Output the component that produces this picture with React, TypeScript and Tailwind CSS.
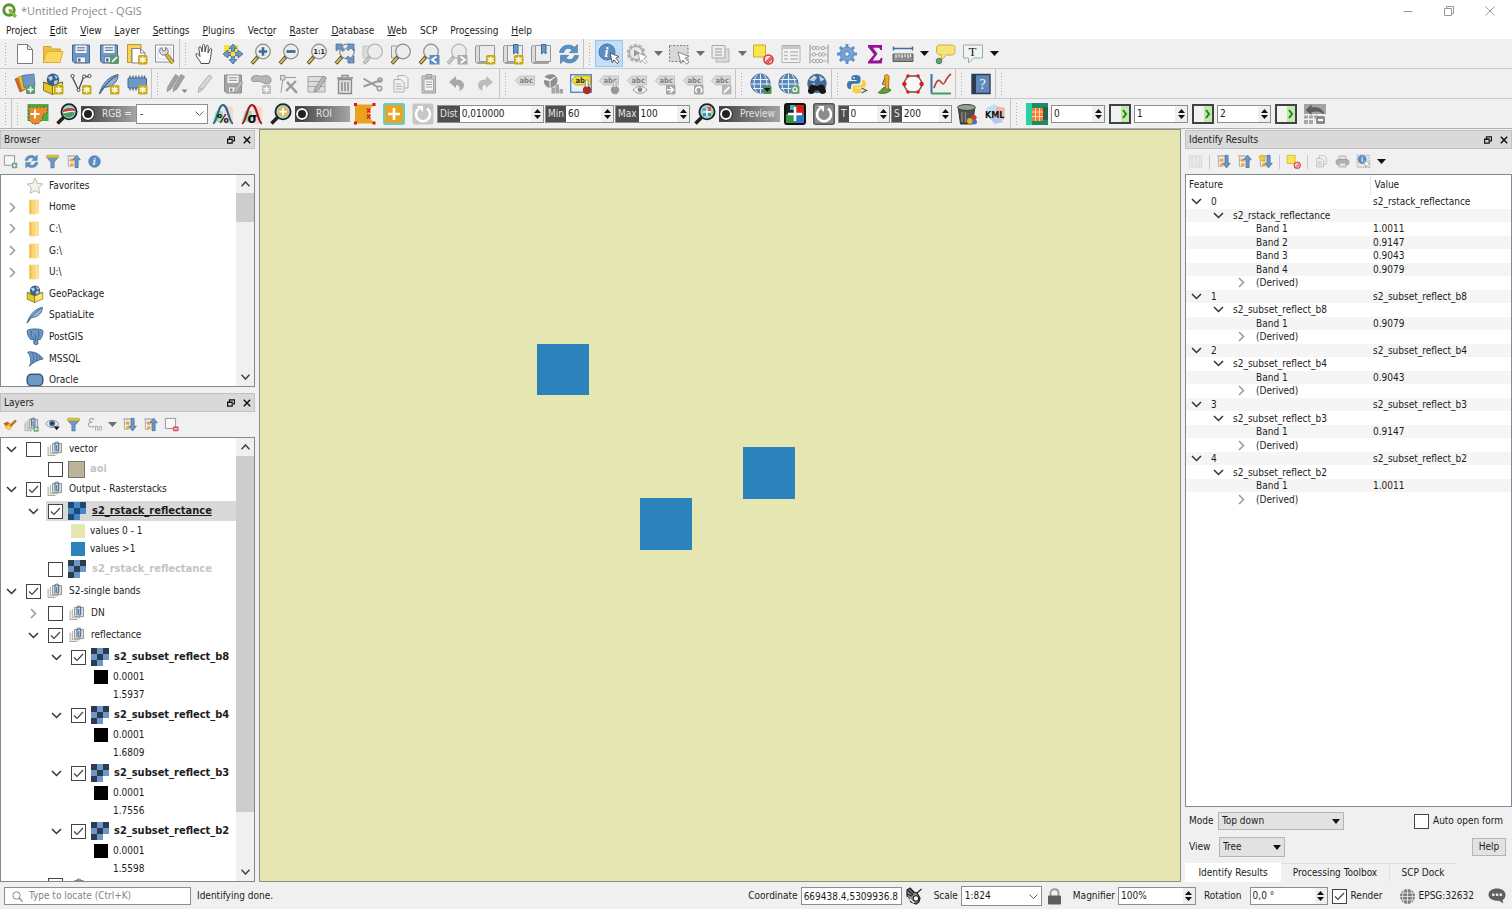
import React, { useState } from "react";
import type { ReactNode } from "react";

const BLUE = "#6d97c4";
const DBLUE = "#3d6b9c";
const GRAY = "#b4b4b4";

function Svg({ children, size = "size-[22px]", box = "0 0 22 22" }: { children: ReactNode; size?: string; box?: string }) {
  return (
    <svg viewBox={box} className={`${size} shrink-0`} fill="none" aria-hidden="true">
      {children}
    </svg>
  );
}

/* ---------- shared drawing parts ---------- */
const Star = () => (
  <g>
    <rect x="12" y="12" width="9.500" height="9.500" rx="1.500" fill="#c9a91c" />
    <path d="M16.700 13.400v6.700M13.700 15l6 3.500M13.700 18.500l6-3.500" stroke="#fffbe0" strokeWidth="1.500" />
  </g>
);
const GreenBadge = ({ d }: { d: string }) => (
  <g>
    <rect x="12" y="12" width="9" height="9" rx="1.500" fill="#5d9a6c" />
    <path d={d} stroke="#fff" strokeWidth="1.600" />
  </g>
);
const Mag = ({ off = false, children }: { off?: boolean; children?: ReactNode }) => (
  <g>
    <path d="M8 13.500L2 20.500" stroke={off ? "#aaa" : "#4a4a3c"} strokeWidth="3.600" />
    <path d="M7 14.600L2.400 19.800" stroke={off ? "#ccc" : "#e9c04b"} strokeWidth="2" />
    <circle cx="13" cy="8.500" r="7.300" fill="#ecedeb" stroke={off ? "#b5b5b5" : "#8b8e86"} strokeWidth="1.200" />
    {children}
  </g>
);
const Globe = () => (
  <g>
    <circle cx="10.500" cy="10.500" r="9.600" fill="#5b86b8" stroke="#456f9f" />
    <path d="M2.500 6.500h16M1 11h19M3 15.500h15M10.500 1v19M7 1.600c-4 5-4 13 0 18M14 1.600c4 5 4 13 0 18" stroke="#e8eff7" strokeWidth="1" />
  </g>
);
const Floppy = ({ c, b }: { c: string; b: string }) => (
  <g>
    <path d="M2.500 2h17v18h-15l-2-2z" fill={c} stroke={b} />
    <path d="M5.500 2.500h11v7.500h-11z" fill="#f3f3f3" />
    <path d="M7 4.800h8M7 7.300h8" stroke={b} />
    <path d="M6.500 14h9v5.500h-9z" fill="#f3f3f3" stroke={b} strokeWidth=".600" />
    <path d="M8 15.500h2.500v3H8z" fill={b} />
  </g>
);
const Tag = ({ y = false }: { y?: boolean }) => (
  <g>
    <path d="M1.500 7.500L5.500 3H20.500v9H5.500z" fill={y ? "#f5dd3c" : "#dadada"} stroke={y ? "#b49c22" : "#bcbcbc"} strokeWidth=".900" />
    <text x="5.500" y="10.300" fontSize="7.500" fontWeight="bold" fill={y ? "#333" : "#808080"} fontFamily="DejaVu Sans Condensed, sans-serif">
      {y ? "ab" : "abc"}
    </text>
  </g>
);
const Cursor = ({ x = 0, y = 0, c = "#fff", s = "#555" }: { x?: number; y?: number; c?: string; s?: string }) => (
  <path d={`M${12 + x} ${10 + y}l9 3.600-3.200 1.600 3.400 3.600-2 1.800-3.300-3.800-1.600 3z`} fill={c} stroke={s} strokeWidth="1" />
);
const ScpLens = ({ children }: { children?: ReactNode }) => (
  <g>
    <path d="M7.500 14.500L1.500 20.500" stroke="#24201c" strokeWidth="3.600" />
    <circle cx="13" cy="8.700" r="7.600" fill="#9fd6d3" stroke="#222" strokeWidth="1.800" />
    {children}
  </g>
);
const Book = ({ mark = false }: { mark?: boolean }) => (
  <g>
    <path d="M5.500 2.500h15v16h-15z" fill="#ececec" stroke="#969696" />
    <path d="M1.500 4c0-2 4-2 4 0v14.500c0 2-4 2-4 0z" fill="#dcdcdc" stroke="#969696" />
    <path d="M3.500 20h14.500v-1.500" stroke="#8a8a8a" strokeWidth="1.300" />
    {mark && <path d="M11.500 1.500H16v9.500l-2.200-2-2.300 2z" fill={BLUE} stroke={DBLUE} />}
  </g>
);
const RefreshShape = () => (
  <g fill="#5a90c4" stroke="#3f74aa" strokeWidth=".6">
    <path d="M1.500 9.500C2 3 11-.5 16.500 4.200L19.500 1.500v8.200h-8.200l2.800-2.800C10 4 6.500 5.500 5.800 9.500z" />
    <path d="M20.500 12.500C20 19 11 22.500 5.500 17.800L2.500 20.500v-8.200h8.200l-2.800 2.800C12 18 15.500 16.500 16.200 12.500z" />
  </g>
);
const TreeArrow = ({ up = false, star = false }: { up?: boolean; star?: boolean }) => (
  <g>
    <path d="M3.500 4v14h4M3.500 9h4" stroke="#a0a0a0" strokeWidth="1.200" />
    <path d="M6 6.500h5v5H6zM6 13.500h5v5H6z" fill="#f0a63a" />
    <path d="M2 3h11" stroke="#a9a9a9" strokeWidth="2" />
    {star && <path d="M6 1l1.600 3.200 3.600.500-2.600 2.500.600 3.500L6 9.200l-3.200 1.500.600-3.500L.8 4.700l3.600-.500z" fill="#f7d02a" stroke="#d6a51c" strokeWidth=".600" />}
    {up ? (
      <path d="M15.500 1.500l5.500 7h-3.200V20h-4.600V8.500H10z" fill={BLUE} stroke={DBLUE} />
    ) : (
      <path d="M15.500 20.500l5.500-7h-3.200V2h-4.600v11.500H10z" fill={BLUE} stroke={DBLUE} />
    )}
  </g>
);
const Funnel = () => (
  <g>
    <path d="M2.500 5L8.500 12v8.500h5V12l6-7z" fill={BLUE} stroke={DBLUE} strokeWidth=".7" />
    <rect x="2" y="1.500" width="18" height="4" rx="1" fill="#d9c53e" stroke="#a8962c" strokeWidth=".6" />
  </g>
);
const GeoBox = () => (
  <g>
    <path d="M1.500 9l9 3.500v9l-9-4z" fill="#e3c525" stroke="#6e6213" strokeWidth=".8" />
    <path d="M20.500 9l-10 3.500v9l10-4.500z" fill="#f8e768" stroke="#6e6213" strokeWidth=".8" />
    <circle cx="11" cy="6.800" r="6.300" fill="#38608c" />
    <path d="M6 4l4-1 1 3-3 2zM12 2l4 2-2 2zM12 8l4-1-1 4-3 1z" fill="#b9d0e8" />
    <path d="M1.500 9l9 3.500 10-3.500" stroke="#6e6213" strokeWidth=".8" />
  </g>
);
const Feather = () => (
  <g>
    <path d="M1.500 20.500C4 12 9 4 20 1.500c.5 6-5 12.500-13.500 12.800z" fill="#8fb2d6" stroke="#3f6286" />
    <path d="M1.500 21C6 13 11 7 18.500 3" stroke="#3f6286" strokeWidth="1.200" />
  </g>
);
const Clip = () => (
  <g>
    <path d="M1.500 8v12h10M4.500 5.500v12h11" stroke="#a8a8a0" strokeWidth="1.400" />
    <path d="M7.500 3.500h12.500v12.500H7.500z" fill="#dededa" stroke="#8f8f88" strokeWidth="1.300" />
    <path d="M11 14V4c0-3.500 5-3.500 5 0v8c0 2.500-2.700 2.500-2.700 0V5.500" stroke="#4b79ab" strokeWidth="1.600" />
  </g>
);
const NoEntry = () => (
  <g>
    <circle cx="16.500" cy="16.500" r="4.500" fill="#f9dddd" stroke="#d83a44" strokeWidth="1.600" />
    <path d="M13.500 19.500l6-6M15.500 20l4.500-4.500" stroke="#d83a44" strokeWidth="1.200" />
  </g>
);

const ICONS: Record<string, ReactNode> = {
  newDoc: <path d="M3.500 1.500h10l5 5v14h-15zM13.500 1.500v5h5" fill="#fff" stroke="#7b7b7b" />,
  open: (
    <g>
      <path d="M1.500 19V3.500h7l2 2.500h8V9" fill="#ecc03c" stroke="#d3a52c" />
      <path d="M1 19.500l4-11h16l-3 11z" fill="#fbd75b" stroke="#dcae35" />
    </g>
  ),
  save: <Floppy c={BLUE} b="#46658c" />,
  saveAs: (
    <g>
      <Floppy c={BLUE} b="#46658c" />
      <GreenBadge d="M14 19l5-5" />
    </g>
  ),
  layout: (
    <g>
      <path d="M1.500 1.500H15v4H5.500v14h-4z" fill="#f3d35a" stroke="#b99a2b" />
      <path d="M6 5.500h8.500l4.500 4.500v10H6z" fill="#fff" stroke="#858585" />
      <path d="M14.500 5.500V10H19" stroke="#858585" />
      <Star />
    </g>
  ),
  tools: (
    <g>
      <path d="M1.500 2h18v17h-18z" fill="#fff" stroke="#86909a" />
      <path d="M4 5h13v11H4z" stroke="#c5d4e3" />
      <path d="M12 11l7 9" stroke="#8d7322" strokeWidth="4" />
      <path d="M12 11l7 9" stroke="#e0b53a" strokeWidth="2.400" />
      <path d="M7.500 4.500A4 4 0 0 0 12 11.500l2-1.500c.8-2.500-.5-5-2.500-5.500L11.500 7.500 9 8z" fill="#ddd" stroke="#777" />
    </g>
  ),
  hand: (
    <path
      d="M7 20.500c-1-3-4-5.500-5-8.500-.4-1.700 1.400-2 2.200-.8l1.800 2.300L4.800 5c0-1.600 2-1.700 2.300-.2L8.200 9l.3-6.500c.1-1.500 2.100-1.500 2.200 0L11 9l1.200-5.800c.4-1.400 2.200-1.100 2.100.4L14 10l1.800-4c.6-1.200 2.200-.6 1.900.8-.9 4.500-.9 9.500-2.700 13.700z"
      fill="#fff"
      stroke="#4d4d4d"
    />
  ),
  pan: (
    <g>
      <rect x="2" y="2" width="14" height="12" fill="#f7df4b" />
      <path d="M11 1l4 4.500h-2.500v4H16V7l5 4-5 4v-2.500h-3.500v4H15L11 21l-4-4.500h2.500v-4H6V15l-5-4 5-4v2.500h3.500v-4H7z" fill={BLUE} stroke={DBLUE} strokeWidth=".8" />
      <path d="M9 9h4v4H9z" fill="#f7df4b" />
    </g>
  ),
  zoomIn: <Mag><path d="M13 4.300v8.400M8.800 8.500h8.400" stroke={DBLUE} strokeWidth="2.600" /></Mag>,
  zoomOut: <Mag><path d="M8.500 8.500h9" stroke={DBLUE} strokeWidth="2.800" /></Mag>,
  zoomOne: (
    <Mag>
      <text x="7.500" y="11.200" fontSize="7" fontWeight="bold" fill="#222" fontFamily="DejaVu Sans Condensed, sans-serif">1:1</text>
    </Mag>
  ),
  zoomFull: (
    <g>
      <Mag />
      <path d="M2 1h6v2.500l3 3-2 2-3.500-3L2 8zM20 1h-6v2.500l-2 2 2 2 3-2.500 3 3zM20 20h-6v-3l-2-2 2-2 3 3 3-3z" fill={BLUE} stroke={DBLUE} strokeWidth=".7" />
    </g>
  ),
  zoomSel: (
    <g>
      <path d="M1 3h12v12H1z" fill="#dcdcdc" stroke="#c4c4c4" />
      <Mag off />
    </g>
  ),
  zoomLayer: (
    <g>
      <path d="M1.500 3h12v12h-12z" fill="#e8e8e8" stroke="#999" />
      <Mag />
    </g>
  ),
  zoomLast: (
    <g>
      <Mag />
      <rect x="11.500" y="12" width="10" height="9.500" fill="#5b8fc4" />
      <path d="M18.500 13.500l-4.500 3.200 4.500 3.200" stroke="#fff" strokeWidth="1.800" />
    </g>
  ),
  zoomNext: (
    <g>
      <Mag off />
      <rect x="11.500" y="12" width="10" height="9.500" fill="#adadad" />
      <path d="M14.500 13.500l4.500 3.200-4.500 3.200" stroke="#fff" strokeWidth="1.800" />
    </g>
  ),
  newView: <g><Book /><Star /></g>,
  newBook: <g><Book mark /><Star /></g>,
  book: <Book mark />,
  refresh: <RefreshShape />,
  identify: (
    <g>
      <circle cx="9" cy="9" r="8" fill="#5c8ec4" stroke="#4677ac" />
      <text x="6.500" y="14" fontSize="14" fontStyle="italic" fontWeight="bold" fill="#fff" fontFamily="Liberation Serif, serif">i</text>
      <Cursor />
    </g>
  ),
  action: (
    <g>
      <circle cx="10" cy="10" r="8" fill="#dadada" stroke={GRAY} strokeWidth="2.600" strokeDasharray="3.400 1.600" />
      <circle cx="10" cy="10" r="6.500" fill="#e8e8e8" stroke="#999" />
      <path d="M8 6.500l6 3.500-6 3.500z" fill="#999" />
      <Cursor s="#aaa" />
    </g>
  ),
  select: (
    <g>
      <rect x="1.500" y="2.500" width="18.500" height="16" fill="#d8d8d8" stroke="#7e7e7e" strokeDasharray="2 1.500" />
      <path d="M10 9l11 4.500-4 1.700 4 4-2.200 2-4-4.200-1.800 3.500z" fill="#fff" stroke="#888" />
    </g>
  ),
  multi: (
    <g>
      <path d="M6 6h13v13H6z" fill="#dcdcdc" stroke={GRAY} />
      <path d="M2 2.500h13V15H2z" fill="#ededed" stroke="#a8a8a8" />
      <path d="M5 6h7M5 9h7M5 12h7" stroke={GRAY} strokeWidth="1.400" />
    </g>
  ),
  deselect: <g><path d="M1.500 2h12v12h-12z" fill="#fbe54d" stroke="#c7ac2c" /><NoEntry /></g>,
  table: (
    <g>
      <path d="M2 2.500h18v17H2z" fill="#f3f3f3" stroke="#b0b0b0" />
      <path d="M2 3h18v3H2z" fill="#c5c5c5" />
      <path d="M4 9h4M10 9h8M4 12.500h4M10 12.500h8M4 16h4M10 16h8" stroke="#bcbcbc" strokeWidth="1.500" />
    </g>
  ),
  abacus: (
    <g>
      <path d="M2 1.500v19M20 1.500v19" stroke="#a8a8a8" strokeWidth="1.300" />
      <path d="M2 5h18M2 11.500h18M2 18h18" stroke="#b5b5b5" />
      {[6, 9.500, 15].map((x) => <circle key={x} cx={x} cy="5" r="1.700" fill="#eee" stroke="#a5a5a5" />)}
      {[6, 12, 15.500].map((x) => <circle key={x} cx={x} cy="11.500" r="1.700" fill="#eee" stroke="#a5a5a5" />)}
      {[6, 9.500, 13].map((x) => <circle key={x} cx={x} cy="18" r="1.700" fill="#eee" stroke="#a5a5a5" />)}
    </g>
  ),
  gear: (
    <g>
      <path d="M11 1v20M1 11h20M3.900 3.900l14.200 14.200M18.100 3.900L3.900 18.100" stroke="#5a8fc9" strokeWidth="2.800" />
      <circle cx="11" cy="11" r="7" fill="#75a3d4" stroke="#5a8fc9" />
      <circle cx="11" cy="11" r="2.300" fill="#f0f0f0" stroke="#4e80b8" />
    </g>
  ),
  sigma: <path d="M4 2h14v5h-1.800c-.4-1.800-1-2.200-3-2.200H9l4.500 6L8.500 17.500h5c2 0 2.800-.8 3.200-2.500h1.800l-.8 5.500H4v-1.800l6-7.200-6-7.600z" fill="#9a0f9a" />,
  measure: (
    <g>
      <path d="M1.500 5.500h19M1.500 3.500v4M20.500 3.500v4" stroke="#3f6f9f" strokeWidth="1.400" />
      <path d="M1 11h20v7.500H1z" fill="#8d8d8d" stroke="#5c5c5c" />
      <path d="M4 11v4M7 11v3M10 11v4M13 11v3M16 11v4M18.500 11v3" stroke="#fff" />
    </g>
  ),
  tips: (
    <g>
      <path d="M5 2h13c3 0 3 2 3 4.500S21 12 18 12h-6l-5 6 .5-6C3 12 2.500 10 2.500 7S3 2 5 2z" fill="#f8e27a" stroke="#cbb03e" />
      <circle cx="5" cy="18" r="2.800" fill="#6aa277" stroke="#4b8057" />
    </g>
  ),
  textNote: (
    <g>
      <path d="M1.500 2h19v13h-9l-5 5v-5h-5z" fill="#eff4f6" stroke="#a2a9ad" />
      <text x="6.500" y="13" fontSize="13" fill="#222" fontFamily="Liberation Serif, serif">T</text>
    </g>
  ),
  /* second bar */
  dataSource: (
    <g>
      <path d="M1 6l8-3 5 12-8 4z" fill="#d8602c" stroke="#a8481e" strokeWidth=".7" />
      <path d="M4 4l9-2 4 12-9 3z" fill="#e5c02a" stroke="#b1921a" strokeWidth=".7" />
      <path d="M8 2.500L20 1l1 11.500-11 2z" fill={BLUE} stroke={DBLUE} strokeWidth=".7" />
      <GreenBadge d="M16.500 13.500v6M13.500 16.500h6" />
    </g>
  ),
  geopkg: <g><GeoBox /><Star /></g>,
  shape: (
    <g>
      <path d="M2.500 4.500L8.500 17 14 3l5 1" stroke="#444e58" strokeWidth="1.300" />
      <g fill="#fff" stroke="#444e58"><circle cx="2.500" cy="3" r="1.600" /><circle cx="14" cy="3.500" r="1.600" /><circle cx="19.500" cy="3" r="1.600" /><circle cx="8.500" cy="17" r="1.500" /></g>
      <Star />
    </g>
  ),
  spatialite: <g><Feather /><Star /></g>,
  memory: (
    <g>
      <path d="M4 2.500v15M7 2.500v15M10 2.500v15M13 2.500v15M16 2.500v15M18.500 2.500v15" stroke="#47698f" strokeWidth="1.300" />
      <rect x="2" y="5" width="18.500" height="10" rx="1" fill={BLUE} stroke="#47698f" />
      <Star />
    </g>
  ),
  edits: (
    <g>
      <path d="M1 18.500l1-5L9.500 1.500l3 2L5 16zM7 18.500l1-5 7-12 3.500 2L11 16z" fill="#a2a2a2" stroke="#858585" strokeWidth=".7" />
      <path d="M15.500 16.500h6l-3 3.500z" fill="#888" />
    </g>
  ),
  pencil: <path d="M4 19.500l1-5L15 2l3 2.200-9.500 12.500zM5 14.500l3.500 2.200" fill="#d6d6d6" stroke="#b0b0b0" />,
  saveEdits: <g><Floppy c="#a5a5a5" b="#8c8c8c" /><path d="M12 20l1-4 5.500-8.500L21 9.500l-5.500 8.500z" fill="#bbb" stroke="#888" strokeWidth=".7" /></g>,
  polygon: (
    <g>
      <path d="M1.500 6c0-4 5-4 8-3 4 1 6-1.500 9 0 4 2.500 3 8-1 8-4 0-4-2-8-2.500C5 8 1.500 10 1.500 6z" fill="#b5b5b5" stroke="#999" />
      <rect x="12" y="12" width="9" height="9" rx="1.500" fill="#bcbcbc" />
      <path d="M16.500 13.200v6.600M13.400 15l6.200 3M13.400 18l6.200-3" stroke="#fff" strokeWidth="1.300" />
    </g>
  ),
  vertex: (
    <g stroke="#9a9a9a">
      <path d="M5 4.500l-2 15M5 4.500h13" />
      <path d="M2.500 2.500h4.500v4.500H2.500z" fill="#ddd" />
      <path d="M9 9l10 11" strokeWidth="2.600" />
      <path d="M18 8L8 18" strokeWidth="2.200" />
    </g>
  ),
  multiEdit: (
    <g>
      <path d="M2 3.500h17v15.500H2zM2 8.500h17M2 13.500h17" fill="#ddd" stroke="#a5a5a5" />
      <path d="M8 19l1-4 8-12 3.500 2L12.500 17z" fill="#b5b5b5" stroke="#858585" strokeWidth=".7" />
    </g>
  ),
  trash: (
    <g stroke="#8a8a8a" strokeWidth="1.300">
      <path d="M4.500 6.500h13v14h-13z" fill="#e0e0e0" />
      <path d="M3 5h16M8 5V2.500h6V5" />
      <path d="M8 9v9M11 9v9M14 9v9" strokeWidth="1.500" />
    </g>
  ),
  cut: (
    <g stroke="#9a9a9a" strokeWidth="1.500">
      <path d="M1.500 5.500l14 8.500M1.500 13.500L19.500 7" strokeWidth="2" />
      <circle cx="18" cy="7" r="2" /><circle cx="17.500" cy="15.500" r="2.200" />
    </g>
  ),
  copy: (
    <g fill="#f1f1f1" stroke="#b0b0b0">
      <path d="M8 2.500h7l3 3V15H8z" />
      <path d="M4 6.500h7l3 3V19H4zM6 11h5M6 13.500h6M6 16h6" />
    </g>
  ),
  paste: (
    <g stroke="#9d9d9d">
      <path d="M4 3h13.500v17H4z" fill="#d0d0d0" />
      <path d="M6 6h9.500v12H6z" fill="#f4f4f4" />
      <path d="M8 9h6M8 11.500h6M8 14h6" />
      <path d="M8 1.500h5.500V5H8z" fill="#bbb" />
    </g>
  ),
  undo: <path d="M3 9l7-6v3.500c6 0 8 3 8 6 0 2.500-2 4.500-5 5.500 1.500-3 .5-6-3-6V15z" fill="#a8a8a8" />,
  redo: <path d="M19 9l-7-6v3.500c-6 0-8 3-8 6 0 2.500 2 4.500 5 5.500-1.500-3-.5-6 3-6V15z" fill="#bcbcbc" />,
  label: <Tag />,
  diagram: (
    <g fill="#8e8e8e">
      <path d="M7.500 8V15A7 7 0 0 1 2 7zM8.500 8l6-4.500a7 7 0 0 1-2 9.500l-4 2zM8 6.500L2.500 4C4 1 12 0 14 3z" />
      <path d="M9.500 14.500h3.500v6H9.500zM13.500 11.500H17v9h-3.500zM17.500 16H21v4.500h-3.500z" fill="#a5a5a5" />
    </g>
  ),
  labelPin: (
    <g>
      <rect x=".7" y="1.700" width="20.600" height="17.600" fill="#e8f0f8" stroke="#5b8ac0" strokeWidth="1.400" />
      <Tag y />
      <circle cx="17" cy="17" r="4.200" fill="#b12a22" />
      <path d="M15.500 7h2.500v7h-2.500z" fill="#fff" stroke="#666" strokeWidth=".6" />
    </g>
  ),
  labelPinOff: <g><Tag /><circle cx="17" cy="17" r="4.200" fill="#999" /><path d="M15.500 8H18v6h-2.500z" fill="#ddd" stroke="#aaa" strokeWidth=".6" /></g>,
  labelEye: <g><Tag /><path d="M7 17c4-5 10-5 14 0-4 4.500-10 4.500-14 0z" fill="#f4f4f4" stroke="#999" /><circle cx="14" cy="16.700" r="2.400" fill="#888" /></g>,
  labelMove: <g><Tag /><rect x="12" y="12" width="9.500" height="9.500" rx="1" fill="#a5a5a5" /><path d="M13 16.700h5M16 13.700l3.500 3-3.500 3" stroke="#fff" strokeWidth="1.500" /></g>,
  labelRot: <g><Tag /><rect x="12" y="12" width="9.500" height="9.500" rx="1" fill="#a5a5a5" /><path d="M15 19.500a3 3 0 1 1 3.500 0" stroke="#fff" strokeWidth="1.500" /></g>,
  labelEdit: <g><Tag /><rect x="12" y="12" width="9.500" height="9.500" rx="1" fill="#b5b5b5" /><path d="M14 19.500l5.500-5.500" stroke="#fff" strokeWidth="1.800" /></g>,
  globeAdd: <g><Globe /><rect x="13" y="12.500" width="8.500" height="8.500" rx="1.500" fill="#4e8f5e" /><path d="M14 15h6.500l-3.200 4z" fill="#111" /></g>,
  globeFind: <g><Globe /><rect x="13" y="12.500" width="8.500" height="8.500" rx="1.500" fill="#6aa377" /><circle cx="17" cy="16.500" r="2" stroke="#fff" strokeWidth="1.200" /></g>,
  metaSearch: (
    <g>
      <circle cx="11" cy="10.500" r="9.700" fill="#416a99" />
      <path d="M3 7l5-4.500 3 2-3 4zM13 2.500l5.500 4-4 2zM5 11l4-1v3z" fill="#c3d5e8" />
      <path d="M2 18.500c0-3.500 2.500-7 4.500-7s2.500 1.500 4.500 1.500 2.500-1.500 4.500-1.500 4.500 3.500 4.500 7c0 3.500-7 3.500-7-1h-4c0 4.500-7 4.500-7 1z" fill="#161616" />
    </g>
  ),
  python: (
    <g>
      <path d="M10 2c-3.500 0-4.500 1.200-4.500 3v2h5v1H4C2 8 1 9.500 1 12s1.200 4 3 4h1v-2.500c0-2 1.500-2.700 3-2.700h4c1.500 0 2.500-1 2.500-2.500V5c0-2-1.500-3-4.500-3z" fill="#3f78ab" />
      <path d="M11 20.500c3.500 0 4.500-1.200 4.500-3v-2h-5v-1H17c2 0 3-1.500 3-3.500s-1-4-3-4h-1v2.500c0 2-1.500 2.700-3 2.700H9c-1.500 0-2.500 1-2.500 2.500v3c0 1.800 1.500 2.800 4.500 2.800z" fill="#f6ce4a" />
      <circle cx="8" cy="4.800" r=".9" fill="#fff" />
      <path d="M15.500 15l5 2.500-5 2.500" stroke="#555" strokeWidth="1.300" />
    </g>
  ),
  profile: (
    <g>
      <path d="M4 19.500c3-.5 3-4 6-5s5 1 7 2.500c-2 3-9 4.500-13 2.500z" fill="#5d9d3c" stroke="#44772a" />
      <path d="M10.500 3.500C10.500 1 15 1 15 3.500L14.500 16h-3z" fill="#f0a828" stroke="#a87518" />
      <path d="M10.500 6L8.500 11l2.500 1" stroke="#8b6a1e" strokeWidth="1.300" />
    </g>
  ),
  hexagon: (
    <g>
      <path d="M6 3h10l5 8-5 8H6l-5-8z" stroke="#555" strokeWidth="1.400" fill="#f8f8f8" />
      <g fill="#e31b1b"><circle cx="6" cy="3" r="1.800" /><circle cx="16" cy="3" r="1.800" /><circle cx="2.500" cy="11" r="2.200" /><circle cx="19.500" cy="11" r="2.200" /><circle cx="6" cy="19" r="1.800" /><circle cx="16" cy="19" r="1.800" /></g>
    </g>
  ),
  plot: (
    <g>
      <path d="M1.500 1v19.500" stroke="#3a6fb0" strokeWidth="2" />
      <path d="M1 20.500h20" stroke="#3aa06a" strokeWidth="2" />
      <path d="M4 15c2-6 4-9 6-7s3 5 5 1 3-6 6-8" stroke="#c03a3a" strokeWidth="1.600" />
    </g>
  ),
  help: (
    <g>
      <path d="M2 1.500h18v19H2z" fill="#5e88b8" stroke="#2e3f52" strokeWidth="1.400" />
      <path d="M2 1.500h4v19H2z" fill="#2b3b4e" />
      <text x="9.500" y="15.500" fontSize="14" fill="#fff" fontFamily="Liberation Serif, serif">?</text>
    </g>
  ),
  /* SCP bar */
  bandset: (
    <g>
      <path d="M.5 1h21v17h-21z" fill="#4cae3e" />
      <path d="M2 4h19l-1 6-4 2-1 5-4 4H6l-4-4z" fill="#ee8a26" />
      <path d="M2 4h19l-1 6-4 2-1 5-4 4H6l-4-4z" stroke="#25606a" strokeDasharray="2 1.500" />
      <path d="M8 6.500v9M3.500 11h9" stroke="#fff" strokeWidth="2" />
    </g>
  ),
  lensRgb: (
    <ScpLens>
      <path d="M7 7c3-2 8-3 12-1l-.5 3C14 7 11 9 7 9z" fill="#c9433c" />
      <path d="M7 10c4 0 7-2 12-.500-1 3-4 5-7 5-2 0-4-2-5-4.500z" fill="#4c9b63" />
      <path d="M7.500 9.500c4 0 7-2 11-1" stroke="#fff" />
    </ScpLens>
  ),
  percent: (
    <g>
      <path d="M11 2l10 2v17H13z" fill="#f8d6d3" /><path d="M1 18L4 8h7v12z" fill="#a6dcb5" />
      <path d="M1 20.500C5 20 6 2 11 2s6 18 10 18.500" stroke="#226a88" strokeWidth="2.200" />
      <text x="5" y="19.500" fontSize="13" fontWeight="bold" fill="#111" fontFamily="DejaVu Sans Condensed, sans-serif">%</text>
    </g>
  ),
  sigmaCurve: (
    <g>
      <path d="M11 2l10 2v17H13z" fill="#f8d6d3" /><path d="M1 18L4 8h7v12z" fill="#a6dcb5" />
      <path d="M1 20.500C5 20 6 2 11 2s6 18 10 18.500" stroke="#9c1b1b" strokeWidth="2.200" />
      <text x="6.500" y="19.500" fontSize="14" fontWeight="bold" fill="#111" fontFamily="DejaVu Sans Condensed, sans-serif">σ</text>
    </g>
  ),
  lensPlus: <ScpLens><circle cx="13" cy="8.700" r="5" fill="#e9b650" /><path d="M13 5v7.500M9.300 8.700h7.500" stroke="#fff" strokeWidth="1.800" /></ScpLens>,
  roiPoly: (
    <g>
      <path d="M1 1.500h19l-4 4.500v9l4 5.500H1z" fill="#e9a21b" />
      <path d="M0 0h3v3H0zM18.500 0h3v3h-3zM0 18.500h3v3H0zM18.500 18.500h3v3h-3z" fill="#d5171b" />
      <path d="M13 5.500l3.500 4M16.500 5.500l-3.500 4M13 11.500l3.500 4M16.500 11.500l-3.500 4" stroke="#e02020" strokeWidth="1.500" />
    </g>
  ),
  roiPlus: (
    <g>
      <rect x="1" y="1" width="20" height="20" rx="1.500" fill="#eba51c" stroke="#56d5cf" strokeWidth="2" />
      <path d="M11 5v12M5 11h12" stroke="#fff" strokeWidth="2.600" />
    </g>
  ),
  redoOff: (
    <g>
      <rect x=".5" y=".5" width="21" height="21" rx="2" fill="#c6c6c6" />
      <path d="M7 5.500a7 7 0 1 0 8 0" stroke="#fff" strokeWidth="2.600" /><path d="M5 3h6v6z" fill="#fff" />
    </g>
  ),
  redoOn: (
    <g>
      <rect x=".8" y=".8" width="20.400" height="20.400" rx="2" fill="#8c8c8c" stroke="#555" strokeWidth="1.500" />
      <path d="M7 5.500a7 7 0 1 0 8 0" stroke="#fff" strokeWidth="2.600" /><path d="M5 3h6v6z" fill="#fff" />
    </g>
  ),
  lensClass: (
    <ScpLens>
      <path d="M8.500 5H13v4H8.500z" fill="#57a5c9" /><path d="M13 4h4v4h-4z" fill="#d4574c" /><path d="M13 9h4v4h-4z" fill="#3ca06a" /><path d="M9 9h3v4H9z" fill="#4a84c4" />
      <path d="M13 5v8M9 9h8" stroke="#fff" strokeWidth="1.300" />
    </ScpLens>
  ),
  classify: (
    <g>
      <rect x="1" y="1" width="20" height="20" rx="2" fill="#1e1e1e" stroke="#111" strokeWidth="2" />
      <path d="M11 2h9v9h-9z" fill="#cf2320" /><path d="M2 11h9v9H2z" fill="#2c9a48" /><path d="M11 11h9v9h-9z" fill="#2b78c4" /><path d="M6 2h5v5H6z" fill="#38b5c4" />
      <path d="M11 4v14M4 11h14" stroke="#fff" strokeWidth="2.600" />
    </g>
  ),
  bin: (
    <g>
      <path d="M2.500 6h16l-2 15h-12z" fill="#4e514d" stroke="#2e302d" />
      <ellipse cx="10.500" cy="4.500" rx="9" ry="3" fill="#8fa38e" stroke="#3a3d39" />
      <path d="M6 9v10M9.500 9v10" stroke="#878a86" strokeWidth="1.300" />
      <circle cx="14" cy="18" r="3" fill="#e9b22a" /><circle cx="18" cy="14.500" r="2.600" fill="#d23b2c" /><circle cx="18.500" cy="19" r="2.500" fill="#3f74c0" />
    </g>
  ),
  kml: (
    <g>
      <path d="M1 5l9-4 3 8-8 4z" fill="#b9e0ef" /><path d="M11 3l9 2-1 12-8-2z" fill="#f1b4a8" /><path d="M4 15l9-3 5 7-8 2z" fill="#b3c7f0" />
      <text x="0" y="15" fontSize="9" fontWeight="bold" fill="#111" fontFamily="DejaVu Sans Condensed, sans-serif">KML</text>
    </g>
  ),
  raster: (
    <g>
      <path d="M0 0h22v22H0z" fill="#1d8a68" /><path d="M0 0h6v22H0z" fill="#27d3a2" /><path d="M17 4h5v13h-5z" fill="#2b5f52" />
      <path d="M6 5h11v13H6z" fill="#fa7b29" />
      <path d="M9.500 5v13M13.500 5v13M6 9h11M6 13.500h11" stroke="#fbe3c8" strokeWidth=".9" />
    </g>
  ),
  goGreen: (
    <g>
      <rect x="1" y="2" width="20" height="18" fill="#eef5ec" stroke="#3f4347" strokeWidth="2" />
      <path d="M12 3h8v16h-8z" fill="#c6e7a9" />
      <path d="M14 7l3 4-3 4" stroke="#178a2a" strokeWidth="2" />
    </g>
  ),
  undoRaster: (
    <g>
      <path d="M0 1h22v10H0z" fill="#a2a2a2" /><path d="M1.500 7l6-5.500v3c7-1 11 1 13 7-5-3.500-8-3.500-13-2.500v3z" fill="#5e5e5e" />
      <path d="M0 12.500h4v3H0zM5 12.500h4v3H5zM10 12.500h4v3h-4zM0 17h4v4H0zM5 17h4v4H5z" fill="#a8a8a8" />
      <rect x="12" y="13" width="9" height="8" rx="1.500" fill="#8a8a8a" /><path d="M14 17h5" stroke="#fff" strokeWidth="2" />
    </g>
  ),
  /* dock icons */
  addLayer: <g><path d="M2 2.500h15v14H2z" fill="#f7f7f7" stroke="#8b8b8b" strokeWidth="1.300" /><rect x="13" y="13" width="8" height="8" rx="1.500" fill="#6ba57a" /><path d="M17 14.500v5M14.500 17h5" stroke="#fff" strokeWidth="1.300" /></g>,
  funnel: <Funnel />,
  treeUp: <TreeArrow up />,
  treeDown: <TreeArrow />,
  treeStar: <TreeArrow star />,
  info: <g><circle cx="11" cy="11" r="8.500" fill="#5c8ec4" stroke="#4677ac" /><text x="8.500" y="16.500" fontSize="15" fontStyle="italic" fontWeight="bold" fill="#fff" fontFamily="Liberation Serif, serif">i</text></g>,
  brush: (
    <g>
      <path d="M1 9l6-2 8 4-4 8c-3 1-7-2-8-5z" fill="#f0b13a" />
      <path d="M1 9l6-2 2 3-5 3z" fill="#dc4b3a" /><path d="M5 15l5 4 2-3-4-4z" fill="#f6d94a" />
      <path d="M11 13l8-8" stroke="#b7722f" strokeWidth="3.400" />
    </g>
  ),
  clipAdd: <g><Clip /><rect x="14" y="14" width="7.500" height="7.500" rx="1.500" fill="#6ba57a" /><path d="M17.700 15.500v4.500M15.500 17.700H20" stroke="#fff" strokeWidth="1.200" /></g>,
  clip: <Clip />,
  eye: (
    <g>
      <path d="M1 10c4-7 15-7 19 0-4 7-15 7-19 0z" fill="#e9eef3" stroke="#76828e" strokeWidth="1.300" />
      <circle cx="10.500" cy="9.500" r="4.500" fill="#4f7297" /><circle cx="10.500" cy="9.500" r="2" fill="#1e2c3a" />
      <path d="M13 14h8.500L17 19.500z" fill="#111" />
    </g>
  ),
  expr: (
    <g>
      <path d="M11 3.500C6 1 2.500 3 3.500 6c.5 1.300 2 1.700 4.500 1.700C4.500 7.700 2 9 2 11.500c0 3 5 4 9 2" stroke="#a3a3a3" strokeWidth="1.600" />
      <path d="M12.500 20v-6h3v6M18 20v-6h3v6" stroke="#b0b0b0" strokeWidth="1.500" />
    </g>
  ),
  removeLayer: <g><path d="M2 2h15v15H2z" fill="#f7f7f7" stroke="#8b8b8b" strokeWidth="1.300" /><rect x="13" y="14" width="8.500" height="7" rx="1.500" fill="#e0525c" /><path d="M14.500 17.500H20" stroke="#fff" strokeWidth="1.500" /></g>,
  form: (
    <g stroke="#c9c9c9">
      <path d="M2 3h18v16H2z" fill="#ececec" />
      <path d="M4.500 7h3M4.500 11h3M4.500 15h3" strokeWidth="1.500" /><path d="M11 6h6v3h-6zM11 13h6v3h-6z" fill="#fafafa" />
    </g>
  ),
  print: (
    <g fill="#b0b0b0" stroke="#999">
      <path d="M6 3h10v5H6z" fill="#e5e5e5" /><rect x="1.500" y="8" width="19" height="8" rx="3" /><path d="M6 13h10v6H6z" fill="#dedede" />
    </g>
  ),
  identSel: (
    <g>
      <rect x="1.500" y="1.500" width="18" height="18" fill="#e4e4e4" stroke="#8a8a8a" strokeDasharray="2 1.600" />
      <circle cx="9" cy="8" r="6.500" fill="#5c8ec4" /><path d="M9 6.500v5M9 4v1.500" stroke="#fff" strokeWidth="1.800" />
      <Cursor s="#999" />
    </g>
  ),
  star: <path d="M11 1.500l2.800 6.300 6.700.7-5 4.600 1.400 6.900L11 16.500 5.100 20l1.400-6.900-5-4.600 6.700-.7z" fill="#f1f2ea" stroke="#b9bba9" strokeWidth="1.200" />,
  folder: <g><path d="M4 2h8v18H4z" fill="#f9d675" /><path d="M12 2h4v17.500h-4z" fill="#fbe09a" /><path d="M4 2l3 2v14.500L4 20z" fill="#efc452" /></g>,
  geobox: <GeoBox />,
  feather: <Feather />,
  postgis: (
    <g stroke="#345b86" strokeWidth="1">
      <path d="M1.500 3C4 .5 18 .5 20.500 3c.8 4-1 8-3 11h-3v5.500c-1.500 1.500-4.500 1-5-1V14H5.500C3 11 1 7 1.500 3z" fill={BLUE} />
      <path d="M7 3c-2 5 0 8 2.500 10M15 3c2 5 0 8-1 11M11.500 8v8" />
    </g>
  ),
  mssql: (
    <g stroke="#345b86" strokeWidth=".9">
      <path d="M2 2.500c7-1.500 15 2 19 8.500-6 1-12 4-17 9 3-6 2-12-2-17.500z" fill={BLUE} />
      <path d="M7 2.500c3 4 3 9 1 14M12 4c2 3 2 6 .5 10M16.500 7c1 2 1 3 .3 5" />
    </g>
  ),
  oracle: <rect x="1.500" y="4" width="19" height="14" rx="5" fill={BLUE} stroke="#3c5878" strokeWidth="1.800" />,
};

const Icon = ({ n, size }: { n: string; size?: string }) => <Svg size={size}>{ICONS[n]}</Svg>;

const Handle = () => <span className="mx-1 h-6 w-[3px] shrink-0 bg-[radial-gradient(circle,#a9a9a9_1px,transparent_1px)] bg-[length:3px_3px]" />;
const Sep = () => <span className="w-px shrink-0 self-stretch bg-[#c3c3c3]" />;
const Drop = ({ label, light = false }: { label: string; light?: boolean }) => (
  <button type="button" aria-label={label} className="flex h-7 w-[14px] shrink-0 items-center justify-center">
    <Svg size="h-[5px] w-[9px]" box="0 0 9 5"><path d="M0 0h9L4.500 5z" fill={light ? "#6d6d6d" : "#111"} /></Svg>
  </button>
);

const Tool = ({ n, active = false, wide = false }: { n: string; active?: boolean; wide?: boolean }) => (
  <button
    type="button"
    aria-label={n}
    className={`flex h-[27px] shrink-0 items-center justify-center border ${wide ? "w-[29px]" : "w-7"} ${active ? "border-[#93c7f0] bg-[#c3def5]" : "border-transparent"}`}
  >
    <Icon n={n} />
  </button>
);
const Tools = ({ names, wide }: { names: string[]; wide?: boolean }) => <>{names.map((n) => <Tool key={n} n={n} wide={wide} />)}</>;

const Spin = ({ label, value, width, tag }: { label: string; value: string; width: string; tag?: string }) => (
  <div className={`flex h-[18px] shrink-0 items-stretch border border-[#8e8e8e] bg-white ${width}`}>
    {tag && <span className="flex items-center bg-[#4f4f4f] px-[2px] text-[#e4e4e4]">{tag}</span>}
    <input aria-label={label} defaultValue={value} className="w-0 min-w-0 flex-1 px-[2px] outline-none" />
    <div className="flex w-3 flex-col bg-[#efefef]">
      <button type="button" aria-label={`${label} up`} className="flex flex-1 items-end justify-center pb-px">
        <Svg size="h-1 w-[7px]" box="0 0 7 4"><path d="M0 4h7L3.500 0z" fill="#111" /></Svg>
      </button>
      <button type="button" aria-label={`${label} down`} className="flex flex-1 items-start justify-center pt-px">
        <Svg size="h-1 w-[7px]" box="0 0 7 4"><path d="M0 0h7L3.500 4z" fill="#111" /></Svg>
      </button>
    </div>
  </div>
);

const Combo = ({ label, value, cls, flat = false }: { label: string; value: string; cls: string; flat?: boolean }) => (
  <div className={`relative shrink-0 ${cls}`}>
    <select
      aria-label={label}
      className={`size-full appearance-none border px-[3px] outline-none ${flat ? "border-[#b5b5b5] bg-[#e2e2e2]" : "border-[#8e8e8e] bg-white"}`}
    >
      <option>{value}</option>
    </select>
    <span className="pointer-events-none absolute inset-y-0 right-1 flex items-center">
      {flat ? (
        <Svg size="h-[5px] w-2" box="0 0 8 5"><path d="M0 0h8L4 5z" fill="#111" /></Svg>
      ) : (
        <Svg size="h-[5px] w-[9px]" box="0 0 9 5"><path d="M.5.5l4 4 4-4" stroke="#666" /></Svg>
      )}
    </span>
  </div>
);

const RadioTag = ({ text, cls }: { text: string; cls: string }) => (
  <label className={`flex h-4 shrink-0 items-center gap-2 bg-linear-to-r from-[#444] to-[#a5a5a5] pl-px text-[#e4e4e4] ${cls}`}>
    <input type="radio" name={text} className="size-3 shrink-0 appearance-none rounded-full border-2 border-white bg-[#222] outline outline-[#333]" />
    {text}
  </label>
);

const Check = ({ on = false, label, id }: { on?: boolean; label: string; id?: string }) => {
  const [v, setV] = useState(on);
  return (
    <span className="relative flex size-[15px] shrink-0">
      <input
        id={id}
        type="checkbox"
        aria-label={label}
        checked={v}
        onChange={() => setV(!v)}
        className="size-[15px] appearance-none border border-[#444] bg-white"
      />
      {v && (
        <span className="pointer-events-none absolute inset-0">
          <Svg size="size-[15px]" box="0 0 15 15"><path d="M3 7.500L6 10.500 12 4" stroke="#444" strokeWidth="1.200" /></Svg>
        </span>
      )}
    </span>
  );
};

const Chevron = ({ open }: { open: boolean }) => (
  <Svg size="size-[11px]" box="0 0 11 11">
    {open ? <path d="M1 3l4.500 4.500L10 3" stroke="#333" strokeWidth="1.500" /> : <path d="M3 1l4.500 4.500L3 10" stroke="#999" strokeWidth="1.500" />}
  </Svg>
);

const DockHeader = ({ title }: { title: string }) => (
  <div className="flex h-[19px] shrink-0 items-center border border-[#c2c2c2] bg-[#d9d9d9] px-[3px]">
    <h2 className="flex-1">{title}</h2>
    <button type="button" aria-label={`Float ${title}`} className="mr-2">
      <Svg size="size-2" box="0 0 8 8"><path d="M2.500 3V.8h5v4H6M2.500 1h5" stroke="#111" strokeWidth="1.200" /><path d="M.6 3.200h4.600v4H.6zM.6 3.500h4.600" stroke="#111" strokeWidth="1.200" /></Svg>
    </button>
    <button type="button" aria-label={`Close ${title}`}>
      <Svg size="size-2" box="0 0 8 8"><path d="M.8.8l6.400 6.400M7.200.8L.8 7.200" stroke="#111" strokeWidth="1.500" /></Svg>
    </button>
  </div>
);

const DockTool = ({ n }: { n: string }) => (
  <button type="button" aria-label={n} className="flex h-5 w-[21px] shrink-0 items-center justify-center">
    <Icon n={n} size="size-[15px]" />
  </button>
);
const DockSep = () => <span className="mx-[3px] h-[14px] w-px bg-[#c9c9c9]" />;

const ScrollArrow = ({ up = false }: { up?: boolean }) => (
  <button type="button" aria-label={up ? "Scroll up" : "Scroll down"} className="flex h-[18px] shrink-0 items-center justify-center">
    <Svg size="h-[6px] w-[9px]" box="0 0 9 6">{up ? <path d="M.5 5.300l4-4.300 4 4.300" stroke="#444" strokeWidth="1.600" /> : <path d="M.5.700l4 4.300 4-4.300" stroke="#444" strokeWidth="1.600" />}</Svg>
  </button>
);

/* ---------- data ---------- */
const MENUS: [string, string, string][] = [
  ["Pro", "j", "ect"], ["", "E", "dit"], ["", "V", "iew"], ["", "L", "ayer"], ["", "S", "ettings"], ["", "P", "lugins"], ["Vect", "o", "r"],
  ["", "R", "aster"], ["", "D", "atabase"], ["", "W", "eb"], ["SCP", "", ""], ["Pro", "c", "essing"], ["", "H", "elp"],
];

const BROWSER: [string, string, boolean][] = [
  ["star", "Favorites", false], ["folder", "Home", true], ["folder", "C:\\", true], ["folder", "G:\\", true], ["folder", "U:\\", true],
  ["geobox", "GeoPackage", false], ["feather", "SpatiaLite", false], ["postgis", "PostGIS", false], ["mssql", "MSSQL", false], ["oracle", "Oracle", false],
];

const RasterIcon = ({ bright = false }: { bright?: boolean }) => {
  const d = bright ? "#1d4a73" : "#2b3b50";
  const l = bright ? "#4486c6" : "#6d97c8";
  return (
    <Svg size="size-[18px]" box="0 0 18 18">
      <path d="M0 0h18v12h-6v6H0z" fill={l} />
      <path d="M0 0h6v6H0zM12 0h6v6h-6zM6 6h6v6H6zM0 12h6v6H0z" fill={d} />
    </Svg>
  );
};

function GroupRow({ name, depth, open, on }: { name: string; depth: string; open: boolean; on: boolean }) {
  return (
    <li className={`flex h-[22px] shrink-0 items-center ${depth}`}>
      <Chevron open={open} />
      <span className="w-[9px]" />
      <Check on={on} label={name} />
      <span className="w-[6px]" />
      <Icon n="clip" size="size-4" />
      <span className="pl-[6px]">{name}</span>
    </li>
  );
}

function BandRow({ name, value }: { name: string; value: string }) {
  return (
    <>
      <li className="flex h-[22px] shrink-0 items-center pl-[50px]">
        <Chevron open />
        <span className="w-[9px]" />
        <Check on label={name} />
        <span className="w-[5px]" />
        <RasterIcon />
        <span className="pl-[5px] text-[11px] font-bold">{name}</span>
      </li>
      <li className="flex h-[18px] shrink-0 items-center gap-[5px] pl-[93px]">
        <span className="size-[14px] bg-black" />
        0.0001
      </li>
      <li className="flex h-[18px] shrink-0 items-center pl-[112px]">{value}</li>
    </>
  );
}

type Row = { d: 0 | 1 | 2; t: string; v?: string; open?: boolean };
const bandGroup = (i: number, b: string, v: string): Row[] => [
  { d: 0, t: String(i), v: `s2_subset_reflect_${b}`, open: true },
  { d: 1, t: `s2_subset_reflect_${b}`, open: true },
  { d: 2, t: "Band 1", v },
  { d: 2, t: "(Derived)", open: false },
];
const ROWS: Row[] = [
  { d: 0, t: "0", v: "s2_rstack_reflectance", open: true },
  { d: 1, t: "s2_rstack_reflectance", open: true },
  { d: 2, t: "Band 1", v: "1.0011" },
  { d: 2, t: "Band 2", v: "0.9147" },
  { d: 2, t: "Band 3", v: "0.9043" },
  { d: 2, t: "Band 4", v: "0.9079" },
  { d: 2, t: "(Derived)", open: false },
  ...bandGroup(1, "b8", "0.9079"),
  ...bandGroup(2, "b4", "0.9043"),
  ...bandGroup(3, "b3", "0.9147"),
  ...bandGroup(4, "b2", "1.0011"),
];
const INDENT = ["pl-[5px]", "pl-[27px]", "pl-[50px]"];

function TitleBar() {
  return (
    <header className="flex h-[21px] shrink-0 items-center bg-white pl-[2px] pr-[17px] font-['Open_Sans',sans-serif] text-[11px] text-[#8a8a8a]">
      <Svg size="size-[15px]" box="0 0 15 15">
        <circle cx="7" cy="7" r="5.200" stroke="#5a9a33" strokeWidth="3" />
        <path d="M7 7l3 .5 4.500 5.500-2 1.500-5-5z" fill="#8fbf4a" stroke="#4f8a2c" strokeWidth=".6" />
        <path d="M6.500 6l3 .6-2.200 2.200z" fill="#ee7913" />
      </Svg>
      <h1 className="flex-1 pl-1">*Untitled Project - QGIS</h1>
      <div className="flex items-center gap-[31px]">
        <button type="button" aria-label="Minimize"><Svg size="size-[10px]" box="0 0 10 10"><path d="M.5 5.500h9" stroke="#999" /></Svg></button>
        <button type="button" aria-label="Restore"><Svg size="size-[10px]" box="0 0 10 10"><path d="M.5 2.500h7v7h-7zM2.500 2.500v-2h7v7h-2" stroke="#999" /></Svg></button>
        <button type="button" aria-label="Close"><Svg size="size-[10px]" box="0 0 10 10"><path d="M.5.5l9 9M9.500.5l-9 9" stroke="#999" /></Svg></button>
      </div>
    </header>
  );
}

function BrowserDock() {
  return (
    <section className="flex flex-col">
      <DockHeader title="Browser" />
      <div className="flex h-[25px] items-center">
        {["addLayer", "refresh", "funnel", "treeUp", "info"].map((n) => <DockTool key={n} n={n} />)}
      </div>
      <div className="flex h-[213px] overflow-hidden border border-[#828790] bg-white">
        <ul className="grid h-[216px] flex-1 auto-rows-fr">
          {BROWSER.map(([icon, text, kids]) => (
            <li key={text} className="flex items-center pl-[6px]">
              <span className="w-[19px]">{kids && <Chevron open={false} />}</span>
              <Icon n={icon} size="size-[18px]" />
              <span className="pl-[5px]">{text}</span>
            </li>
          ))}
        </ul>
        <div className="flex w-[18px] flex-col bg-[#f0f0f0]">
          <ScrollArrow up />
          <div className="h-[29px] bg-[#cdcdcd]" />
          <div className="flex-1" />
          <ScrollArrow />
        </div>
      </div>
    </section>
  );
}

function LayersDock() {
  return (
    <section className="mt-[6px] flex min-h-0 flex-1 flex-col">
      <DockHeader title="Layers" />
      <div className="flex h-[25px] shrink-0 items-center">
        {["brush", "clipAdd", "eye", "funnel", "expr"].map((n) => <DockTool key={n} n={n} />)}
        <Drop label="Filter options" light />
        {["treeDown", "treeUp", "removeLayer"].map((n) => <DockTool key={n} n={n} />)}
      </div>
      <div className="flex min-h-0 flex-1 border border-[#828790] bg-white">
        <ul className="flex min-w-0 flex-1 flex-col overflow-hidden">
          <GroupRow name="vector" depth="pl-[5px]" open on={false} />
          <li className="flex h-[18px] shrink-0 items-center pl-[47px]">
            <Check label="aoi" />
            <span className="ml-[5px] size-[17px] border border-[#777] bg-[#beb297]" />
            <span className="pl-[5px] text-[11px] font-bold text-[#c4c4c4]">aoi</span>
          </li>
          <GroupRow name="Output - Rasterstacks" depth="pl-[5px]" open on />
          <li className="flex h-[22px] shrink-0 items-center pl-[27px]">
            <Chevron open />
            <span className="ml-[7px] flex h-5 flex-1 items-center bg-[#d9d9d9] pl-[2px]">
              <Check on label="s2_rstack_reflectance" />
              <span className="w-[5px]" />
              <RasterIcon bright />
              <span className="pl-[6px] text-[11px] font-bold underline">s2_rstack_reflectance</span>
            </span>
          </li>
          <li className="flex h-[18px] shrink-0 items-center gap-[5px] pl-[70px]"><span className="size-[14px] bg-[#e6e6b2]" />values 0 - 1</li>
          <li className="flex h-[18px] shrink-0 items-center gap-[5px] pl-[70px]"><span className="size-[14px] bg-[#2c83bb]" />values &gt;1</li>
          <li className="flex h-[22px] shrink-0 items-center pl-[47px]">
            <Check label="s2_rstack_reflectance copy" />
            <span className="w-[5px]" />
            <RasterIcon />
            <span className="pl-[6px] text-[11px] font-bold text-[#c4c4c4]">s2_rstack_reflectance</span>
          </li>
          <GroupRow name="S2-single bands" depth="pl-[5px]" open on />
          <GroupRow name="DN" depth="pl-[27px]" open={false} on={false} />
          <GroupRow name="reflectance" depth="pl-[27px]" open on />
          <BandRow name="s2_subset_reflect_b8" value="1.5937" />
          <BandRow name="s2_subset_reflect_b4" value="1.6809" />
          <BandRow name="s2_subset_reflect_b3" value="1.7556" />
          <BandRow name="s2_subset_reflect_b2" value="1.5598" />
          <li className="flex h-[22px] shrink-0 items-start pl-[47px]">
            <Check label="more" />
            <span className="w-[6px]" />
            <Icon n="clip" size="size-4" />
          </li>
        </ul>
        <div className="flex w-[18px] flex-col bg-[#f0f0f0]">
          <ScrollArrow up />
          <div className="grow-[7] bg-[#cdcdcd]" />
          <div className="grow-[1]" />
          <ScrollArrow />
        </div>
      </div>
    </section>
  );
}

function IdentifyDock() {
  return (
    <aside className="flex w-[327px] shrink-0 flex-col">
      <div className="mt-px flex min-h-0 flex-1 flex-col">
        <DockHeader title="Identify Results" />
        <div className="flex h-[25px] shrink-0 items-center">
          <DockTool n="form" />
          <DockSep />
          <DockTool n="treeDown" /><DockTool n="treeUp" /><DockTool n="treeStar" />
          <DockSep />
          <DockTool n="deselect" />
          <DockSep />
          <DockTool n="copy" /><DockTool n="print" /><DockTool n="identSel" />
          <Drop label="Identify mode" />
        </div>
        <div className="min-h-0 flex-1 overflow-hidden border border-[#828790] bg-white">
          <table className="h-[331px] w-full table-fixed border-collapse text-left">
            <thead>
              <tr className="h-5">
                <th className="w-[184px] border-r border-[#e5e5e5] py-0 pl-[3px] font-normal">Feature</th>
                <th className="py-0 pl-[4px] font-normal">Value</th>
              </tr>
            </thead>
            <tbody>
              {ROWS.map((r, i) => (
                <tr key={i} className="leading-[13px] even:bg-[#f5f5f5]">
                  <td className={`p-0 ${INDENT[r.d]}`}>
                    <span className="flex h-[13px] items-center">
                      <span className="w-5">{r.open !== undefined && <Chevron open={r.open} />}</span>
                      {r.t}
                    </span>
                  </td>
                  <td className="p-0 pl-[3px]">{r.v}</td>
                </tr>
              ))}
            </tbody>
          </table>
        </div>
      </div>
      <div className="flex h-7 shrink-0 items-center pl-1 pr-[9px]">
        <span className="w-[29px]">Mode</span>
        <Combo label="Mode" value="Top down" cls="h-[18px] w-[126px]" flat />
        <span className="flex-1" />
        <Check label="Auto open form" id="auto-open" />
        <label htmlFor="auto-open" className="pl-1">Auto open form</label>
      </div>
      <div className="flex h-6 shrink-0 items-center pl-1 pr-[6px]">
        <span className="w-[30px]">View</span>
        <Combo label="View" value="Tree" cls="h-5 w-[66px]" flat />
        <span className="flex-1" />
        <button type="button" className="h-[18px] w-[34px] border border-[#b5b5b5] bg-[#e2e2e2]">Help</button>
      </div>
      <div className="mt-1 flex h-[19px] shrink-0 items-stretch">
        <button type="button" className="w-24 bg-white">Identify Results</button>
        <button type="button" className="w-[109px] border-r border-t border-[#dedede]">Processing Toolbox</button>
        <button type="button" className="w-[66px] border-t border-[#dedede]">SCP Dock</button>
      </div>
    </aside>
  );
}

function StatusBar() {
  return (
    <footer className="flex h-[27px] shrink-0 items-center pl-1 pr-[6px] pt-px">
      <div className="flex h-[18px] w-[187px] items-center border border-[#8e8e8e] bg-white px-[7px]">
        <Svg size="size-[11px]" box="0 0 11 11"><circle cx="4.500" cy="4.500" r="3.700" stroke="#888" /><path d="M7 7l3.500 3.500" stroke="#888" strokeWidth="1.300" /></Svg>
        <input aria-label="Locator" placeholder="Type to locate (Ctrl+K)" className="w-0 flex-1 pl-[6px] outline-none placeholder:text-[#858585]" />
      </div>
      <span className="flex-1 pl-[6px]">Identifying done.</span>
      <label className="flex items-center gap-[3px]">Coordinate<input defaultValue="669438.4,5309936.8" className="h-[18px] w-[101px] border border-[#8e8e8e] bg-white px-[2px]" /></label>
      <button type="button" aria-label="Toggle extents" className="ml-[3px] mr-[11px]">
        <Svg size="size-[18px]" box="0 0 18 18">
          <path d="M2 3l3-2 4 4 3 1 3 5-1 4-3 2-5-2-4-6z" fill="#8c8c8c" stroke="#222" strokeWidth="1.200" />
          <path d="M3 3l5 5M5 1.500l4 5M2 7l5 2M12 6l4.500-4" stroke="#222" strokeWidth="1.100" />
          <circle cx="11" cy="11.500" r="2.700" fill="#fff" stroke="#222" strokeWidth="1.100" /><path d="M5 12l4 4M2 10l3 4" stroke="#eee" strokeWidth="1.200" />
        </Svg>
      </button>
      <span className="mr-[3px]">Scale</span>
      <Combo label="Scale" value="1:824" cls="h-5 w-[81px]" />
      <button type="button" aria-label="Lock scale" className="ml-[5px] mr-[11px]">
        <Svg size="h-[17px] w-[15px]" box="0 0 15 17"><path d="M3.500 8V5c0-5 8-5 8 0v3" stroke="#9a9a9a" strokeWidth="1.800" /><rect x="1" y="7.500" width="13" height="9" rx="1" fill="#5e5e5e" /></Svg>
      </button>
      <span className="mr-[3px]">Magnifier</span>
      <Spin label="Magnifier" value="100%" width="w-[78px]" />
      <span className="mx-2">Rotation</span>
      <Spin label="Rotation" value="0,0 °" width="w-[78px]" />
      <span className="w-1" />
      <Check on label="Render" id="render" />
      <label htmlFor="render" className="pl-1">Render</label>
      <button type="button" className="ml-4 flex items-center gap-[3px]">
        <Svg size="size-[17px]" box="0 0 17 17">
          <circle cx="8.500" cy="8.500" r="7.500" fill="#7d7d7d" /><path d="M2 5h13M1 8.500h15M2 12h13M8.500 1v15M5.500 1.500c-2.500 4-2.500 10 0 14M11.500 1.500c2.500 4 2.500 10 0 14" stroke="#f0f0f0" strokeWidth=".8" />
        </Svg>
        EPSG:32632
      </button>
      <button type="button" aria-label="Messages" className="ml-[14px]">
        <Svg size="h-4 w-[18px]" box="0 0 18 16"><path d="M9 .5c5 0 8.500 2.700 8.500 6.200 0 3-1.500 4.500-3 5.300l.8 3.500-4.300-2.800C5 13.200.5 10.500.5 6.700.5 3.200 4 .5 9 .5z" fill="#5e5e5e" /><path d="M4 5.500h2.500V8H4zM7.800 5.500h2.500V8H7.800zM11.600 5.500h2.500V8h-2.500z" fill="#e5e5e5" /></Svg>
      </button>
    </footer>
  );
}

export default function App() {
  return (
    <div className="flex h-screen flex-col overflow-hidden bg-[#f0f0f0] font-['DejaVu_Sans_Condensed','DejaVu_Sans',sans-serif] text-[10px] leading-[14px] text-[#1c1c1c]">
      <TitleBar />
      <nav className="flex h-[18px] shrink-0 items-center gap-[13px] bg-white px-[6px] pt-px">
        {MENUS.map(([a, b, c]) => (
          <button type="button" key={a + b + c}>{a}<span className="underline">{b}</span>{c}</button>
        ))}
      </nav>
      <div className="flex h-[30px] shrink-0 items-center border-b border-[#c9c9c9]">
        <Handle />
        <Tools names={["newDoc", "open", "save", "saveAs", "layout", "tools"]} />
        <Sep /><Handle />
        <Tools names={["hand", "pan", "zoomIn", "zoomOut", "zoomOne", "zoomFull", "zoomSel", "zoomLayer", "zoomLast", "zoomNext", "newView", "newBook", "book", "refresh"]} />
        <Sep /><Handle />
        <Tool n="identify" active />
        <Tool n="action" /><Drop label="Actions" light />
        <Tool n="select" /><Drop label="Select" light />
        <Tool n="multi" /><Drop label="Select by value" light />
        <Tools names={["deselect", "table", "abacus", "gear", "sigma", "measure"]} />
        <Drop label="Measure" />
        <Tools names={["tips", "textNote"]} />
        <Drop label="Annotation" />
      </div>
      <div className="flex h-[30px] shrink-0 items-center border-b border-[#c9c9c9]">
        <Handle />
        <Tools names={["dataSource", "geopkg", "shape", "spatialite", "memory"]} />
        <Sep /><Handle />
        <Tools names={["edits", "pencil", "saveEdits", "polygon", "vertex", "multiEdit", "trash", "cut", "copy", "paste", "undo", "redo"]} />
        <Sep /><Handle />
        <Tools names={["label", "diagram", "labelPin", "labelPinOff", "labelEye", "labelMove", "labelRot", "labelEdit"]} />
        <Sep /><Handle />
        <Tools names={["globeAdd", "globeFind", "metaSearch"]} />
        <Sep /><Handle />
        <Tools names={["python", "profile", "hexagon", "plot"]} />
        <Sep /><Handle />
        <Tool n="help" />
        <Sep /><Handle />
      </div>
      <div className="flex h-[30px] shrink-0 items-center border-b border-[#b0b0a8]">
        <Handle /><Sep /><Handle />
        <Tools names={["bandset", "lensRgb"]} wide />
        <RadioTag text="RGB =" cls="w-[55px]" />
        <Combo label="RGB" value="-" cls="h-5 w-[72px]" />
        <Tools names={["percent", "sigmaCurve", "lensPlus"]} wide />
        <RadioTag text="ROI" cls="w-[55px]" />
        <Tools names={["roiPoly", "roiPlus", "redoOff"]} wide />
        <div className="flex gap-px">
          <Spin label="Dist" tag="Dist" value="0,010000" width="w-[107px]" />
          <Spin label="Min" tag="Min" value="60" width="w-[69px]" />
          <Spin label="Max" tag="Max" value="100" width="w-[75px]" />
        </div>
        <Tool n="lensClass" wide />
        <RadioTag text="Preview" cls="w-[61px]" />
        <Tools names={["classify", "redoOn"]} wide />
        <div className="flex gap-px">
          <Spin label="Transparency" tag="T" value="0" width="w-[52px]" />
          <Spin label="Size" tag="S" value="200" width="w-[61px]" />
        </div>
        <Tools names={["bin", "kml"]} wide />
        <Sep /><Handle />
        <Tool n="raster" wide />
        {["0", "1", "2"].map((v) => (
          <React.Fragment key={v}>
            <Spin label={`Value ${v}`} value={v} width="w-[54px]" />
            <Tool n="goGreen" wide />
          </React.Fragment>
        ))}
        <Tool n="undoRaster" wide />
      </div>
      <main className="flex min-h-0 flex-1">
        <div className="mt-px flex w-[255px] shrink-0 flex-col">
          <BrowserDock />
          <LayersDock />
        </div>
        <div className="relative ml-1 mr-1 min-w-0 flex-1 overflow-hidden border border-[#8e8e86] bg-[#e6e6b2]">
          <span className="absolute left-[277px] top-[214px] h-[51px] w-[52px] bg-[#2c83bb]" />
          <span className="absolute left-[483px] top-[317px] h-[52px] w-[52px] bg-[#2c83bb]" />
          <span className="absolute left-[380px] top-[368px] h-[52px] w-[52px] bg-[#2c83bb]" />
        </div>
        <IdentifyDock />
      </main>
      <StatusBar />
    </div>
  );
}
